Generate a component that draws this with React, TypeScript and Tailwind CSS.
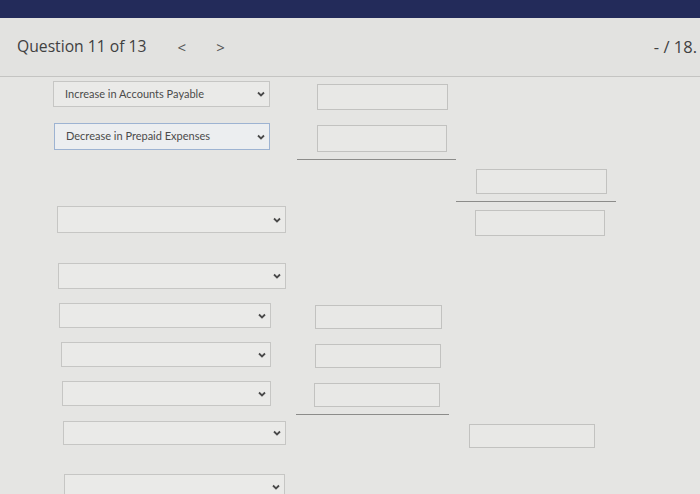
import React from "react";

const Chevron = () => (
  <svg width="8" height="6" viewBox="0 0 8 6" className="shrink-0">
    <path d="M1 1.5 L4 4.5 L7 1.5" fill="none" stroke="#4a4a4a" strokeWidth="1.8" />
  </svg>
);

const Select = ({
  className,
  text,
  focused,
}: {
  className: string;
  text?: string;
  focused?: boolean;
}) => (
  <div
    className={`flex items-center justify-between pl-[11px] pr-[4px] border ${
      focused ? "border-[#9db3d2] bg-[#eceef0]" : "border-[#c6c6c4] bg-[#eaeae8]"
    } ${className}`}
  >
    <span className="text-[11px] text-[#4b4b4b]">{text}</span>
    <Chevron />
  </div>
);

const Box = ({ className }: { className: string }) => (
  <div className={`border border-[#c2c2c0] bg-[#e8e8e6] ${className}`} />
);

export default function App() {
  return (
    <div
      className="w-[700px] h-[494px] overflow-hidden bg-[#e5e5e3]"
      style={{ fontFamily: "Lato, 'Open Sans', sans-serif" }}
    >
      <div className="h-[18px] bg-[#232b5a]" />
      <div className="h-[59px] flex items-center justify-between pl-[17px] pr-[3px] border-b border-[#c4c4c2] bg-[#e2e2e0] font-['Open_Sans',sans-serif] text-[#404040]">
        <div className="flex items-center">
          <span className="text-[15.7px]">Question 11 of 13</span>
          <span className="ml-[31px] text-[15px] text-[#555]">&lt;</span>
          <span className="ml-[30px] text-[15px] text-[#555]">&gt;</span>
        </div>
        <span className="text-[16.5px]">- / 18.</span>
      </div>

      <div className="flex flex-col">
        {/* row A */}
        <div className="flex items-start h-[42px] mt-[4px]">
          <Select className="ml-[53px] w-[217px] h-[26px]" text="Increase in Accounts Payable" />
          <Box className="ml-[47px] mt-[3px] w-[131px] h-[26px]" />
        </div>
        {/* row B */}
        <div className="flex items-start h-[46px]">
          <Select className="ml-[54px] w-[216px] h-[27px]" text="Decrease in Prepaid Expenses" focused />
          <div className="ml-[27px] w-[159px] flex flex-col">
            <Box className="ml-[20px] mt-[2px] w-[130px] h-[27px]" />
            <div className="mt-[7px] h-px bg-[#8c8c8a]" />
          </div>
        </div>
        {/* row C */}
        <div className="flex items-start h-[37px]">
          <div className="ml-[456px] w-[160px] flex flex-col">
            <Box className="ml-[20px] w-[131px] h-[25px]" />
            <div className="mt-[7px] h-px bg-[#8c8c8a]" />
          </div>
        </div>
        {/* row D */}
        <div className="flex items-start h-[57px]">
          <Select className="ml-[57px] w-[229px] h-[27px]" />
          <Box className="ml-[189px] mt-[4px] w-[130px] h-[26px]" />
        </div>
        {/* row E */}
        <div className="flex items-start h-[40px]">
          <Select className="ml-[58px] w-[228px] h-[26px]" />
        </div>
        {/* row F */}
        <div className="flex items-start h-[39px]">
          <Select className="ml-[59px] w-[212px] h-[25px]" />
          <Box className="ml-[44px] mt-[2px] w-[127px] h-[24px]" />
        </div>
        {/* row G */}
        <div className="flex items-start h-[39px]">
          <Select className="ml-[61px] w-[210px] h-[25px]" />
          <Box className="ml-[44px] mt-[2px] w-[126px] h-[24px]" />
        </div>
        {/* row H */}
        <div className="flex items-start h-[40px]">
          <Select className="ml-[62px] w-[209px] h-[25px]" />
          <div className="ml-[25px] w-[153px] flex flex-col">
            <Box className="ml-[18px] mt-[2px] w-[126px] h-[24px]" />
            <div className="mt-[7px] h-px bg-[#8c8c8a]" />
          </div>
        </div>
        {/* row I */}
        <div className="flex items-start h-[53px]">
          <Select className="ml-[63px] w-[223px] h-[24px]" />
          <Box className="ml-[183px] mt-[3px] w-[126px] h-[24px]" />
        </div>
        {/* row J */}
        <div className="flex items-start h-[30px]">
          <Select className="ml-[64px] w-[221px] h-[26px]" />
        </div>
      </div>
    </div>
  );
}
